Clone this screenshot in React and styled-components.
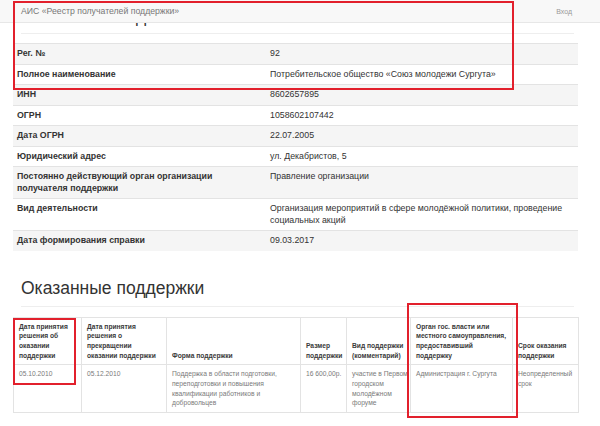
import React from 'react';
import styled, { createGlobalStyle } from 'styled-components';

const Global = createGlobalStyle`
  html, body { margin: 0; padding: 0; background: #fff; }
  body { font-family: "Liberation Sans", Arial, sans-serif; color: #333; }
`;

const Root = styled.div`
  position: relative;
  width: 600px;
  height: 426px;
  overflow: hidden;
  background: #fff;
`;

const Navbar = styled.header`
  position: absolute;
  top: 0;
  left: 0;
  right: 0;
  height: 22px;
  box-sizing: content-box;
  background: #f8f8f8;
  border-bottom: 1px solid #e7e7e7;
  display: flex;
  align-items: center;
  justify-content: space-between;
  padding: 0 28px 0 21px;
  z-index: 2;
`;

const Brand = styled.span`
  font-size: 8.7px;
  color: #777;
`;

const NavLink = styled.span`
  font-size: 7px;
  color: #999;
`;

const Page = styled.main`
  padding: 0 22px 0 13px;
`;

const PageHeader = styled.div`
  margin: 0 4px 0 8px;
  padding: 6px 0 7px;
  border-bottom: 1px solid #eee;
`;

const Title = styled.h1`
  margin: 0;
  font-size: 17.5px;
  line-height: 20px;
  font-weight: normal;
  color: #333;
  white-space: nowrap;
  clip-path: inset(15px 0 0 0);
`;

const InfoTable = styled.table`
  width: 100%;
  margin-top: 9px;
  border-collapse: collapse;
  font-size: 8.8px;
  line-height: 11.5px;

  tr:nth-child(odd) { background: #f5f5f5; }
`;

const Cell = styled.td`
  padding: ${p => (p.$label ? '4px 10px 4px 4px' : '4px')};
  border-top: 1px solid #e3e3e3;
  vertical-align: top;
  color: #333;
  font-weight: ${p => (p.$label ? 'bold' : 'normal')};
  width: ${p => (p.$label ? '239px' : 'auto')};
`;

const SectionTitle = styled.h2`
  margin: 27px 4px 10px 8px;
  padding-bottom: 8px;
  border-bottom: 1px solid #eee;
  font-size: 17.5px;
  line-height: 20px;
  font-weight: normal;
  color: #333;
`;

const SupportTable = styled.table`
  width: 565px;
  table-layout: fixed;
  border-collapse: collapse;
  border: 1px solid #e3e3e3;
  font-size: 6.7px;
  line-height: 9.7px;
`;

const Th = styled.th`
  border: 1px solid #e3e3e3;
  padding: 4px 5px;
  text-align: left;
  vertical-align: bottom;
  font-weight: bold;
  color: #3a3a3a;
`;

const Td = styled.td`
  border: 1px solid #e3e3e3;
  padding: 4px 5px;
  vertical-align: top;
  color: #7a7a7a;
`;

const Mark = styled.div`
  position: absolute;
  top: ${p => p.$top}px;
  left: ${p => p.$left}px;
  width: ${p => p.$w}px;
  height: ${p => p.$h}px;
  box-sizing: border-box;
  border: 2px solid #e2202c;
  z-index: 3;
  pointer-events: none;
`;

const info = [
  ['Рег. №', '92'],
  ['Полное наименование', 'Потребительское общество «Союз молодежи Сургута»'],
  ['ИНН', '8602657895'],
  ['ОГРН', '1058602107442'],
  ['Дата ОГРН', '22.07.2005'],
  ['Юридический адрес', 'ул. Декабристов, 5'],
  ['Постоянно действующий орган организации получателя поддержки', 'Правление организации'],
  ['Вид деятельности', 'Организация мероприятий в сфере молодёжной политики, проведение социальных акций'],
  ['Дата формирования справки', '09.03.2017'],
];

const columns = [
  { w: 68, title: 'Дата принятия решения об оказании поддержки' },
  { w: 85, title: 'Дата принятия решения о прекращении оказании поддержки' },
  { w: 134, title: 'Форма поддержки' },
  { w: 46, title: 'Размер поддержки' },
  { w: 64, title: 'Вид поддержки (комментарий)' },
  { w: 102, title: 'Орган гос. власти или местного самоуправления, предоставивший поддержку' },
  { w: 66, title: 'Срок оказания поддержки' },
];

const row = [
  '05.10.2010',
  '05.12.2010',
  'Поддержка в области подготовки, переподготовки и повышения квалификации работников и добровольцев',
  '16\u00a0600,00р.',
  'участие\u00a0в\u00a0Первом городском молодёжном форуме',
  'Администрация г. Сургута',
  'Неопределенный срок',
];

export default function App() {
  return (
    <Root>
      <Global />
      <Navbar>
        <Brand>АИС «Реестр получателей поддержки»</Brand>
        <NavLink>Вход</NavLink>
      </Navbar>
      <Page>
        <PageHeader>
          <Title>Основные сведения</Title>
        </PageHeader>
        <InfoTable>
          <tbody>
            {info.map(([k, v]) => (
              <tr key={k}>
                <Cell $label>{k}</Cell>
                <Cell>{v}</Cell>
              </tr>
            ))}
          </tbody>
        </InfoTable>
        <SectionTitle>Оказанные поддержки</SectionTitle>
        <SupportTable>
          <colgroup>
            {columns.map((c, i) => (
              <col key={i} style={{ width: c.w }} />
            ))}
          </colgroup>
          <thead>
            <tr>
              {columns.map((c, i) => (
                <Th key={i}>{c.title}</Th>
              ))}
            </tr>
          </thead>
          <tbody>
            <tr>
              {row.map((v, i) => (
                <Td key={i}>{v}</Td>
              ))}
            </tr>
          </tbody>
        </SupportTable>
      </Page>
      <Mark $top={1} $left={13} $w={501} $h={89} />
      <Mark $top={318} $left={13} $w={63} $h={67} />
      <Mark $top={303} $left={407} $w={111} $h={115} />
    </Root>
  );
}
